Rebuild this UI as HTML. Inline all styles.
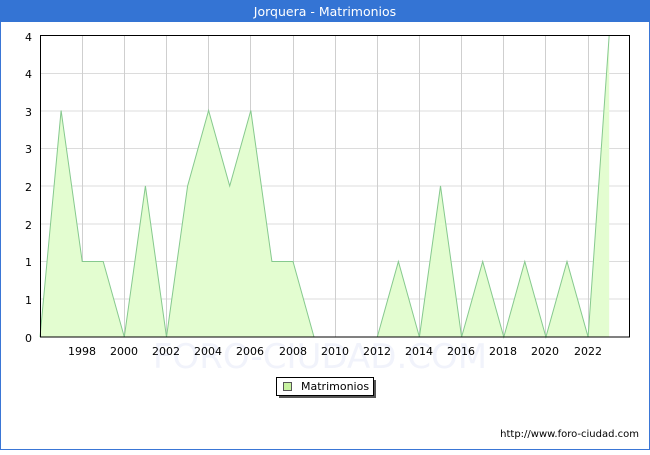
<!DOCTYPE html>
<html><head><meta charset="utf-8"><style>
html,body{margin:0;padding:0;background:#fff}
</style></head><body>
<svg width="650" height="450" xmlns="http://www.w3.org/2000/svg" font-family="DejaVu Sans, Liberation Sans, sans-serif">
<rect x="0.5" y="0.5" width="649" height="449" fill="#fff" stroke="#3a76d6"/>
<rect x="0" y="0" width="650" height="22" fill="#3474d4"/>
<text x="325" y="16" fill="#fff" font-size="12.5" text-anchor="middle">Jorquera - Matrimonios</text>
<g stroke="#dcdcdc" stroke-width="1">
<line x1="40" y1="73.5" x2="630" y2="73.5"/><line x1="40" y1="111" x2="630" y2="111"/>
<line x1="40" y1="148.5" x2="630" y2="148.5"/><line x1="40" y1="186" x2="630" y2="186"/>
<line x1="40" y1="224" x2="630" y2="224"/><line x1="40" y1="261.5" x2="630" y2="261.5"/>
<line x1="40" y1="299" x2="630" y2="299"/>
</g>
<g stroke="#cfcfcf" stroke-width="1">
<line x1="82.5" y1="35" x2="82.5" y2="337"/><line x1="124.5" y1="35" x2="124.5" y2="337"/>
<line x1="166.5" y1="35" x2="166.5" y2="337"/><line x1="208.5" y1="35" x2="208.5" y2="337"/>
<line x1="250.5" y1="35" x2="250.5" y2="337"/><line x1="293.5" y1="35" x2="293.5" y2="337"/>
<line x1="335.5" y1="35" x2="335.5" y2="337"/><line x1="377.5" y1="35" x2="377.5" y2="337"/>
<line x1="419.5" y1="35" x2="419.5" y2="337"/><line x1="461.5" y1="35" x2="461.5" y2="337"/>
<line x1="503.5" y1="35" x2="503.5" y2="337"/><line x1="545.5" y1="35" x2="545.5" y2="337"/>
<line x1="588.5" y1="35" x2="588.5" y2="337"/>
</g>
<polygon fill="#e3fdd0" stroke="none" points="40,337 61.1,110.5 82.2,261.5 103.2,261.5 124.3,337 145.4,186 166.5,337 187.6,186 208.6,110.5 229.7,186 250.8,110.5 271.9,261.5 293,261.5 314,337 335.1,337 356.2,337 377.3,337 398.4,261.5 419.4,337 440.5,186 461.6,337 482.7,261.5 503.8,337 524.8,261.5 545.9,337 567,261.5 588.1,337 609.2,35 609.2,337"/>
<polyline fill="none" stroke="#86c98e" stroke-width="1" points="40,337 61.1,110.5 82.2,261.5 103.2,261.5 124.3,337 145.4,186 166.5,337 187.6,186 208.6,110.5 229.7,186 250.8,110.5 271.9,261.5 293,261.5 314,337 335.1,337 356.2,337 377.3,337 398.4,261.5 419.4,337 440.5,186 461.6,337 482.7,261.5 503.8,337 524.8,261.5 545.9,337 567,261.5 588.1,337 609.2,35"/>
<rect x="40.5" y="35.5" width="589" height="301.5" fill="none" stroke="#000"/>
<text x="320" y="368" fill="#f1f3fb" font-size="34" text-anchor="middle">FORO-CIUDAD.COM</text>
<g font-size="11" fill="#000" text-anchor="end">
<text x="32" y="41">4</text><text x="32" y="78">4</text><text x="32" y="116">3</text>
<text x="32" y="153">3</text><text x="32" y="191">2</text><text x="32" y="229">2</text>
<text x="32" y="266">1</text><text x="32" y="304">1</text><text x="32" y="342">0</text>
</g>
<g font-size="11" fill="#000" text-anchor="middle">
<text x="82" y="355">1998</text><text x="124" y="355">2000</text><text x="166" y="355">2002</text>
<text x="208" y="355">2004</text><text x="250" y="355">2006</text><text x="293" y="355">2008</text>
<text x="335" y="355">2010</text><text x="377" y="355">2012</text><text x="419" y="355">2014</text>
<text x="461" y="355">2016</text><text x="503" y="355">2018</text><text x="545" y="355">2020</text>
<text x="588" y="355">2022</text>
</g>
<rect x="279" y="380" width="97" height="18" fill="#555"/>
<rect x="276.5" y="377.5" width="97" height="18" fill="#fff" stroke="#000"/>
<rect x="283.5" y="382.5" width="8" height="8" fill="#c7f2a0" stroke="#555"/>
<text x="301" y="390" font-size="11" fill="#000">Matrimonios</text>
<text x="639" y="437" font-size="10" fill="#000" text-anchor="end">http://www.foro-ciudad.com</text>
</svg>
</body></html>
